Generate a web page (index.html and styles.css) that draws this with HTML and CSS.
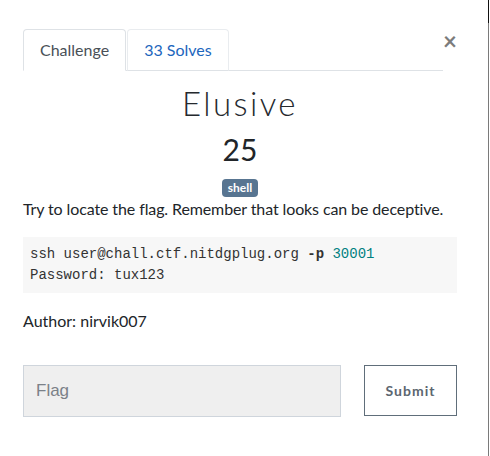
FILE: index.html
```html
<!DOCTYPE html>
<html>
<head>
<meta charset="utf-8">
<link rel="stylesheet" href="styles.css">
</head>
<body>
<div class="frame">
  <div class="modal">
    <div class="header">
      <ul class="tabs">
        <li class="tab active">Challenge</li>
        <li class="tab link">33 Solves</li>
      </ul>
      <span class="close">×</span>
    </div>
    <h2 class="name">Elusive</h2>
    <h3 class="value">25</h3>
    <div class="tags"><span class="badge">shell</span></div>
    <p class="desc">Try to locate the flag. Remember that looks can be deceptive.</p>
    <pre class="code">ssh user@chall.ctf.nitdgplug.org <b>-p</b> <span class="num">30001</span>
Password: tux123</pre>
    <p class="author">Author: nirvik007</p>
    <div class="submit-row">
      <div class="flag-input">Flag</div>
      <div class="submit-btn">Submit</div>
    </div>
  </div>
  <div class="edge"></div>
</div>
</body>
</html>
```

FILE: styles.css
```css
html, body {
  margin: 0;
  padding: 0;
  background: #fff;
}
body {
  font-family: Lato, "Liberation Sans", sans-serif;
  color: #212529;
  width: 490px;
  height: 456px;
  overflow: hidden;
}
.frame {
  display: flex;
  justify-content: space-between;
  width: 489px;
  height: 456px;
}
.edge {
  width: 1px;
  height: 456px;
  background: linear-gradient(to bottom, #111 0, #111 23px, #7a7a7a 23px, #7a7a7a 100%);
}
.modal {
  padding: 29px 0 0 23px;
  width: 434px;
}
.header {
  display: flex;
  align-items: flex-start;
}
.tabs {
  list-style: none;
  margin: 0;
  padding: 0;
  display: flex;
  width: 420px;
  border-bottom: 1px solid #dee2e6;
  height: 41px;
}
.tab {
  box-sizing: border-box;
  height: 42px;
  padding: 8px 16px;
  font-size: 16px;
  line-height: 24px;
  border: 1px solid #dee2e6;
  border-radius: 4px 4px 0 0;
  margin-right: 1px;
  background: #fff;
}
.tab.active {
  color: #495057;
  border-bottom-color: #fff;
}
.tab.link {
  color: #1d66bd;
  border-color: #e9ecef #e9ecef #dee2e6;
}
.close {
  flex: 1;
  text-align: center;
  font-family: Lato, sans-serif;
  font-weight: 700;
  font-size: 24px;
  line-height: 24px;
  color: #7c7c7c;
}
.name {
  margin: 13px 0 0;
  text-align: center;
  font-family: Lato, sans-serif;
  font-weight: 300;
  font-size: 33px;
  line-height: 39.6px;
  letter-spacing: 2.4px;
  color: #25292e;
}
.value {
  margin: 7px 0 0;
  text-align: center;
  font-weight: 400;
  font-size: 30px;
  line-height: 36px;
  color: #212529;
}
.tags {
  margin-top: 12.6px;
  text-align: center;
  height: 18px;
}
.badge {
  display: inline-block;
  background: #587591;
  color: #fff;
  font-weight: 700;
  font-size: 12px;
  line-height: 12px;
  padding: 3px 6px;
  border-radius: 4px;
  vertical-align: top;
}
.desc {
  margin: 0 0 16px;
  font-size: 16px;
  line-height: 24px;
  letter-spacing: -0.11px;
}
.code {
  margin: 0 0 16px;
  background: #f7f7f7;
  padding: 7px;
  font-family: "Liberation Mono", monospace;
  font-size: 14px;
  line-height: 21px;
  color: #333;
}
.code b {
  font-weight: 700;
}
.code .num {
  color: #008080;
}
.author {
  margin: 0;
  font-size: 16px;
  line-height: 24px;
  color: #212529;
}
.submit-row {
  margin-top: 32px;
  display: flex;
  justify-content: space-between;
  align-items: flex-start;
}
.flag-input {
  box-sizing: border-box;
  width: 318px;
  height: 52px;
  background: #efefef;
  border: 1px solid #cfd5dc;
  padding: 0 12px;
  font-family: "Liberation Sans", Arial, sans-serif;
  font-size: 17px;
  line-height: 50px;
  color: #7b8188;
}
.submit-btn {
  box-sizing: border-box;
  width: 93px;
  height: 51px;
  border: 1px solid #606e7a;
  text-align: center;
  font-weight: 700;
  font-size: 14px;
  letter-spacing: 1px;
  line-height: 49px;
  color: #5c6670;
}
```
